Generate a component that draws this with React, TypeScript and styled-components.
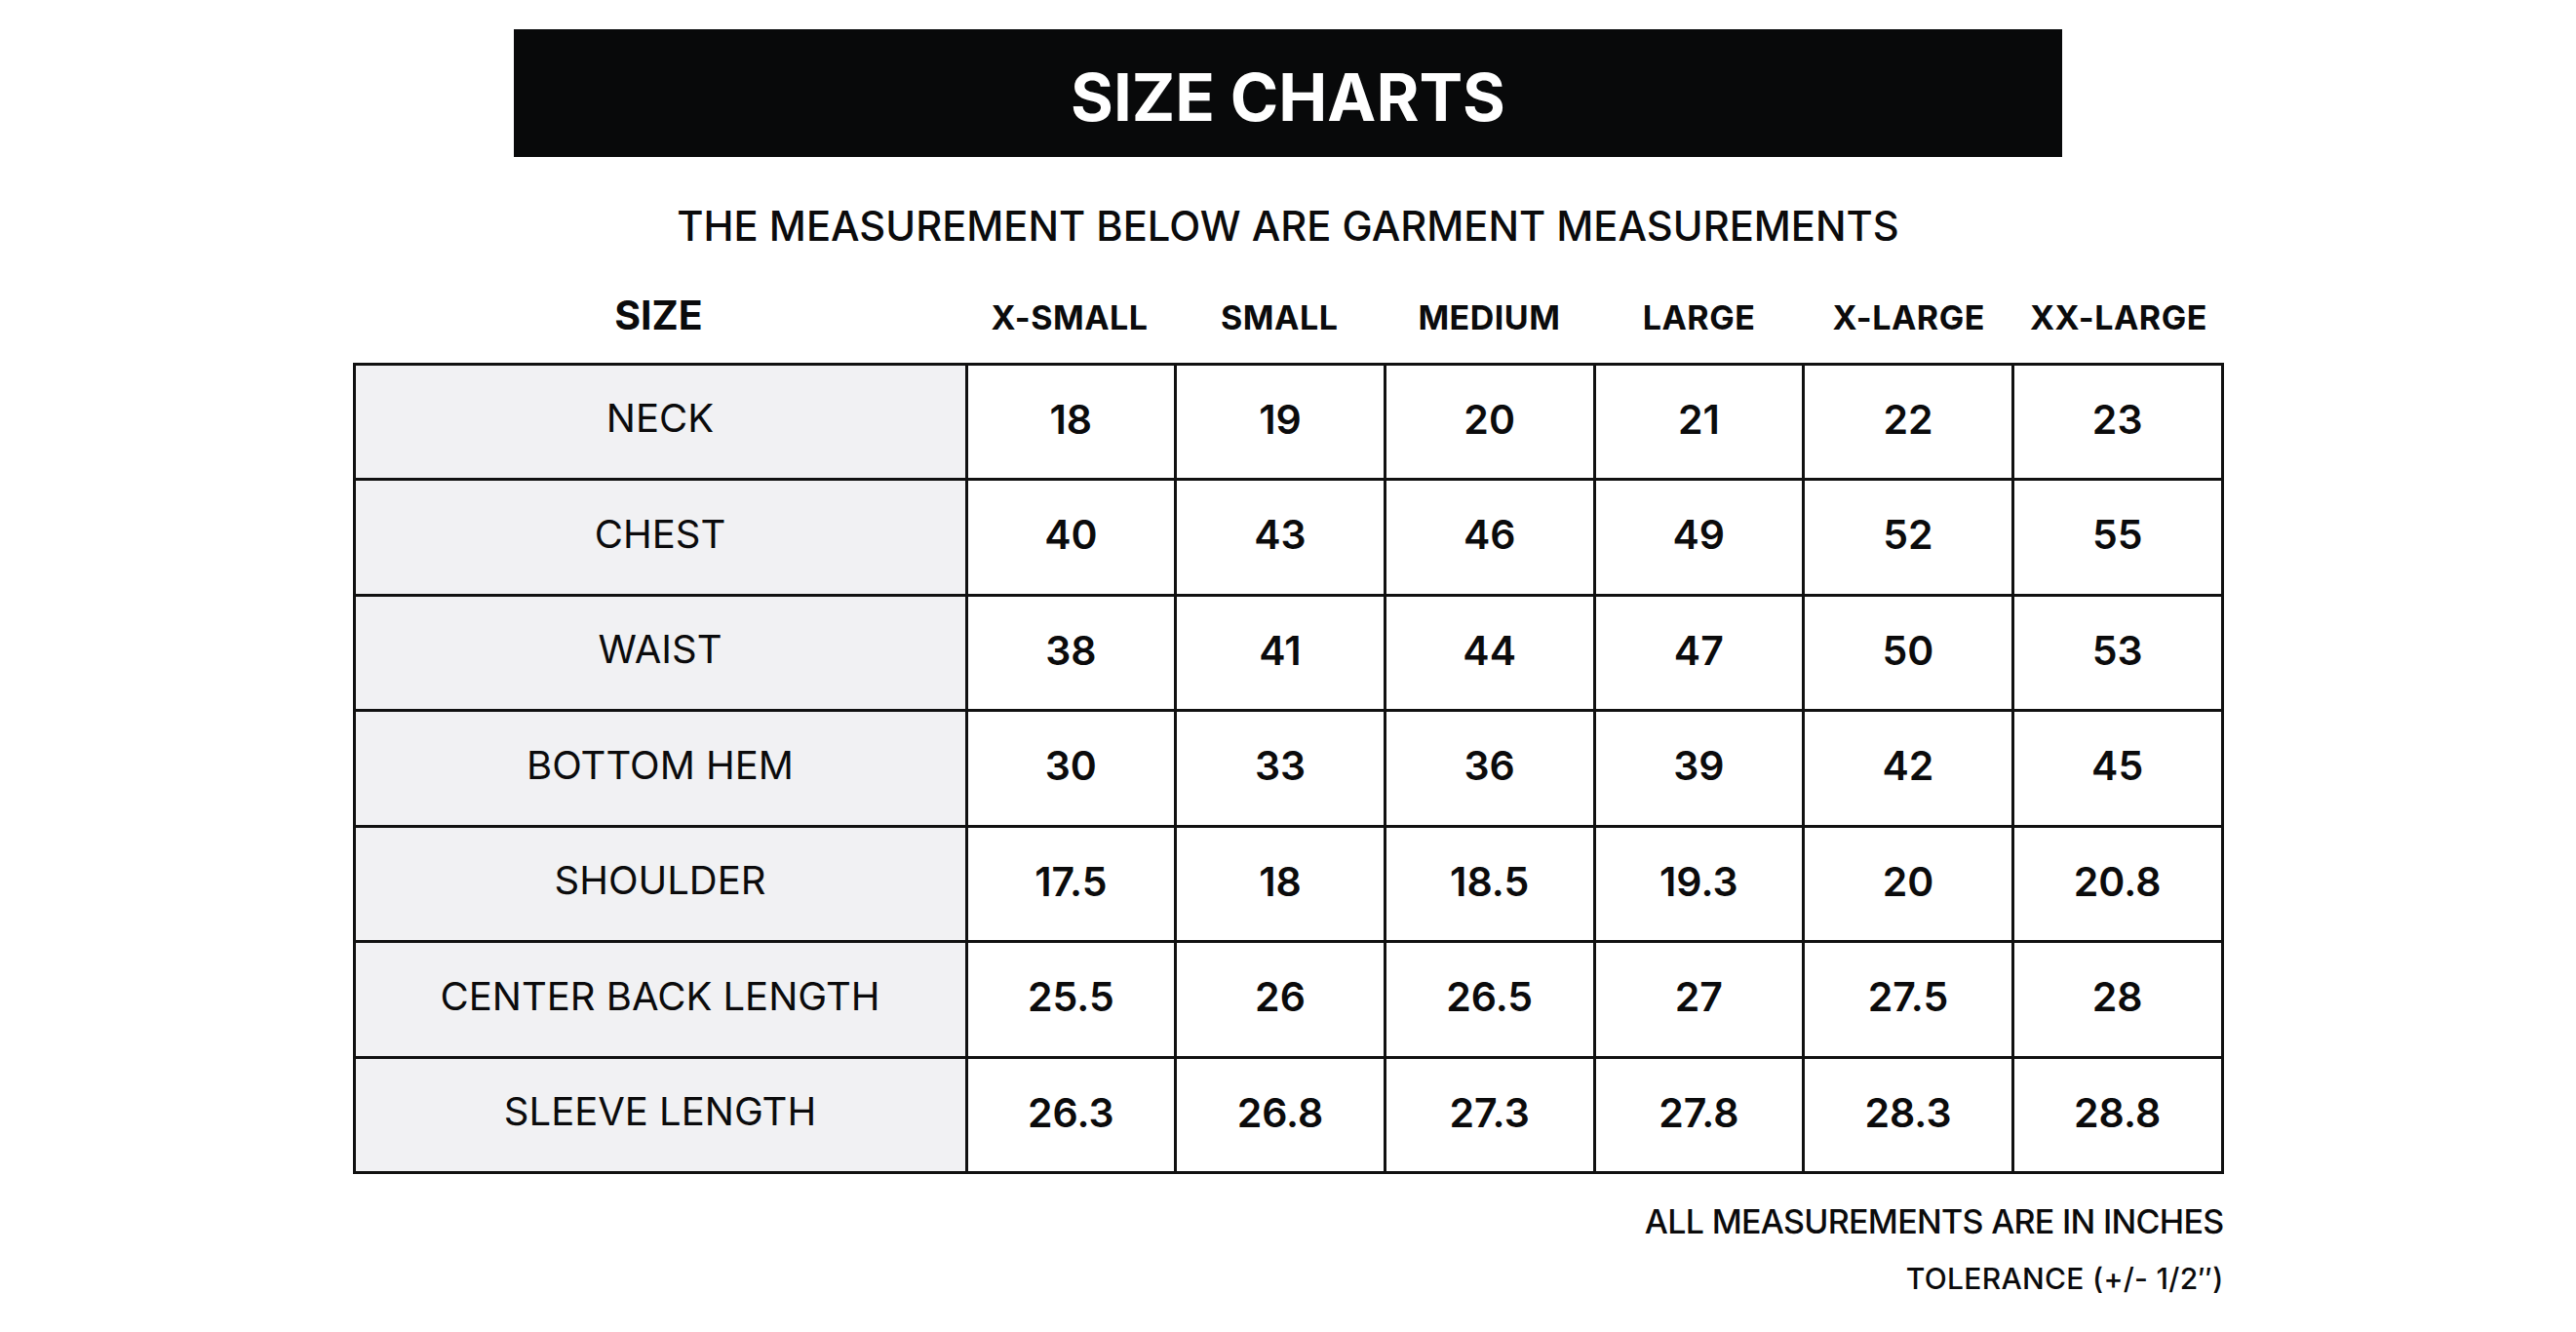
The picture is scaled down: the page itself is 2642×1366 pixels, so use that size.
import React from "react";
import styled, { createGlobalStyle } from "styled-components";

const Global = createGlobalStyle`
  html, body { margin: 0; padding: 0; background: #ffffff; }
  body { font-family: "Inter", "Liberation Sans", sans-serif; color: #0b0b0c; }
`;

const Page = styled.div`
  width: 2642px;
  height: 1366px;
  display: flex;
  flex-direction: column;
  align-items: center;
  box-sizing: border-box;
  padding-top: 30px;
`;

const TitleBar = styled.div`
  width: 1588px;
  height: 131px;
  box-sizing: border-box;
  padding-top: 8px;
  background: #08090a;
  display: flex;
  align-items: center;
  justify-content: center;
`;

const Title = styled.h1`
  margin: 0;
  color: #ffffff;
  font-family: "Inter", sans-serif;
  font-weight: 700;
  font-size: 67px;
  line-height: 1;
`;

const Subtitle = styled.div`
  margin-top: 51px;
  font-size: 41.7px;
  font-weight: 500;
  line-height: 1;
`;

const Chart = styled.div`
  width: 1919px;
  display: flex;
  flex-direction: column;
`;

const HeadRow = styled.div`
  display: grid;
  grid-template-columns: 628px repeat(6, 1fr);
  height: 118px;
  box-sizing: border-box;
  padding-bottom: 29px;
  align-items: end;
`;

const HeadCell = styled.div<{ $big?: boolean }>`
  text-align: center;
  font-weight: 700;
  font-size: ${(p) => (p.$big ? "41px" : "34px")};
  letter-spacing: ${(p) => (p.$big ? "0px" : "0.5px")};
  line-height: 1;
  margin-bottom: ${(p) => (p.$big ? "-1px" : "0")};
`;

const Grid = styled.div`
  display: grid;
  grid-template-columns: 628px repeat(6, 1fr);
  grid-auto-rows: 118.5px;
  border-top: 3px solid #111;
  border-left: 3px solid #111;
`;

const LabelCell = styled.div`
  background: #f1f1f3;
  border-right: 3px solid #111;
  border-bottom: 3px solid #111;
  display: flex;
  align-items: center;
  justify-content: center;
  font-size: 40px;
  font-weight: 400;
  line-height: 1;
  padding-bottom: 6px;
`;

const ValueCell = styled.div`
  background: #ffffff;
  border-right: 3px solid #111;
  border-bottom: 3px solid #111;
  display: flex;
  align-items: center;
  justify-content: center;
  font-size: 41px;
  font-weight: 600;
  line-height: 1;
  padding-bottom: 4px;
`;

const Notes = styled.div`
  width: 1919px;
  display: flex;
  flex-direction: column;
  align-items: flex-end;
`;

const Note = styled.div<{ $small?: boolean }>`
  font-size: ${(p) => (p.$small ? "30px" : "34px")};
  letter-spacing: ${(p) => (p.$small ? "0.3px" : "-0.7px")};
  font-weight: 500;
  line-height: 1;
  margin-top: ${(p) => (p.$small ? "26px" : "32px")};
`;

const sizes = ["X-SMALL", "SMALL", "MEDIUM", "LARGE", "X-LARGE", "XX-LARGE"];

const rows: [string, string[]][] = [
  ["NECK", ["18", "19", "20", "21", "22", "23"]],
  ["CHEST", ["40", "43", "46", "49", "52", "55"]],
  ["WAIST", ["38", "41", "44", "47", "50", "53"]],
  ["BOTTOM HEM", ["30", "33", "36", "39", "42", "45"]],
  ["SHOULDER", ["17.5", "18", "18.5", "19.3", "20", "20.8"]],
  ["CENTER BACK LENGTH", ["25.5", "26", "26.5", "27", "27.5", "28"]],
  ["SLEEVE LENGTH", ["26.3", "26.8", "27.3", "27.8", "28.3", "28.8"]],
];

export default function App() {
  return (
    <>
      <Global />
      <Page>
        <TitleBar>
          <Title>SIZE CHARTS</Title>
        </TitleBar>
        <Subtitle>THE MEASUREMENT BELOW ARE GARMENT MEASUREMENTS</Subtitle>
        <Chart>
          <HeadRow>
            <HeadCell $big>SIZE</HeadCell>
            {sizes.map((s) => (
              <HeadCell key={s}>{s}</HeadCell>
            ))}
          </HeadRow>
          <Grid>
            {rows.map(([label, vals]) => (
              <React.Fragment key={label}>
                <LabelCell>{label}</LabelCell>
                {vals.map((v, i) => (
                  <ValueCell key={i}>{v}</ValueCell>
                ))}
              </React.Fragment>
            ))}
          </Grid>
        </Chart>
        <Notes>
          <Note>ALL MEASUREMENTS ARE IN INCHES</Note>
          <Note $small>TOLERANCE (+/- 1/2″)</Note>
        </Notes>
      </Page>
    </>
  );
}
